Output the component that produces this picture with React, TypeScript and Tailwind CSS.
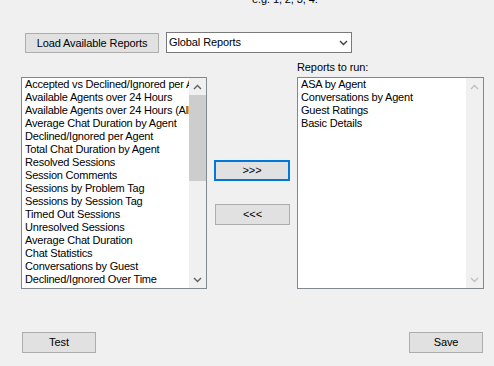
// React Imports
import { FC } from "react";

const availableReports = [
  "Accepted vs Declined/Ignored per Agent",
  "Available Agents over 24 Hours",
  "Available Agents over 24 Hours (All)",
  "Average Chat Duration by Agent",
  "Declined/Ignored per Agent",
  "Total Chat Duration by Agent",
  "Resolved Sessions",
  "Session Comments",
  "Sessions by Problem Tag",
  "Sessions by Session Tag",
  "Timed Out Sessions",
  "Unresolved Sessions",
  "Average Chat Duration",
  "Chat Statistics",
  "Conversations by Guest",
  "Declined/Ignored Over Time",
];

const reportsToRun = [
  "ASA by Agent",
  "Conversations by Agent",
  "Guest Ratings",
  "Basic Details",
];

/**
 * Small chevron used by the scrollbar and the combo box.
 */
const Chevron: FC<{ dir: "up" | "down"; color: string }> = ({ dir, color }) => (
  <svg width="9" height="6" viewBox="0 0 9 6">
    <polyline
      points={dir === "up" ? "1,5 4.5,1.5 8,5" : "1,1 4.5,4.5 8,1"}
      fill="none"
      stroke={color}
      strokeWidth="1.4"
    />
  </svg>
);

/**
 * WinForms style list box with a vertical scrollbar.
 */
const ListBox: FC<{ items: string[]; enabled: boolean; width: string }> = ({
  items,
  enabled,
  width,
}) => {
  const arrow = enabled ? "#606060" : "#bfbfbf";
  return (
    <div className={`${width} flex h-[212px] border border-[#828790] bg-white`}>
      {/* Items */}
      <div className="flex-1 overflow-hidden whitespace-nowrap pl-[3px] leading-[13px] tracking-[-0.2px] text-black">
        {items.map((item) => (
          <div key={item} className="h-[13px]">
            {item}
          </div>
        ))}
      </div>

      {/* Scrollbar */}
      <div className="flex w-[17px] flex-col bg-[#f0f0f0]">
        <div className="flex h-[17px] items-center justify-center">
          <Chevron dir="up" color={arrow} />
        </div>
        <div className="flex-1">
          {enabled && <div className="h-[86px] w-full bg-[#cdcdcd]" />}
        </div>
        <div className="flex h-[17px] items-center justify-center">
          <Chevron dir="down" color={arrow} />
        </div>
      </div>
    </div>
  );
};

export default function App() {
  return (
    <div className="h-[366px] w-[494px] overflow-hidden bg-[#f0f0f0] font-['Liberation_Sans',Arial,sans-serif] text-[11px] leading-[13px] tracking-[-0.1px] text-black">
      {/* Hint text, cut off at the top */}
      <div className="h-[32px] overflow-hidden">
        <p className="mt-[-7px] pl-[252px]">e.g. 1, 2, 3, 4.</p>
      </div>

      {/* Load row */}
      <div className="flex items-start pl-[25px]">
        <button className="mt-px h-[20px] w-[134px] border border-[#adadad] bg-[#e1e1e1] text-center">
          Load Available Reports
        </button>
        <div className="ml-[7px] flex h-[21px] w-[186px] items-center justify-between border border-[#7a7a7a] bg-white pl-[2px] pr-[3px]">
          <span>Global Reports</span>
          <Chevron dir="down" color="#404040" />
        </div>
      </div>

      {/* Lists */}
      <div className="mt-[8px] flex pl-[21px]">
        <div className="mt-[16px]">
          <ListBox items={availableReports} enabled width="w-[186px]" />
        </div>

        <div className="flex w-[90px] flex-col pl-[7px] pt-[99px]">
          <button className="h-[21px] w-[76px] border-2 border-[#0078d7] bg-[#e1e1e1] text-center">
            &gt;&gt;&gt;
          </button>
          <button className="ml-px mt-[23px] h-[21px] w-[75px] border border-[#adadad] bg-[#e1e1e1] text-center">
            &lt;&lt;&lt;
          </button>
        </div>

        <div className="flex flex-col">
          <div className="h-[13px]">Reports to run:</div>
          <div className="mt-[3px]">
            <ListBox items={reportsToRun} enabled={false} width="w-[187px]" />
          </div>
        </div>
      </div>

      {/* Bottom buttons */}
      <div className="mt-[43px] flex justify-between pl-[22px] pr-[11px]">
        <button className="h-[21px] w-[74px] border border-[#adadad] bg-[#e1e1e1] text-center">
          Test
        </button>
        <button className="h-[21px] w-[74px] border border-[#adadad] bg-[#e1e1e1] text-center">
          Save
        </button>
      </div>
    </div>
  );
}
